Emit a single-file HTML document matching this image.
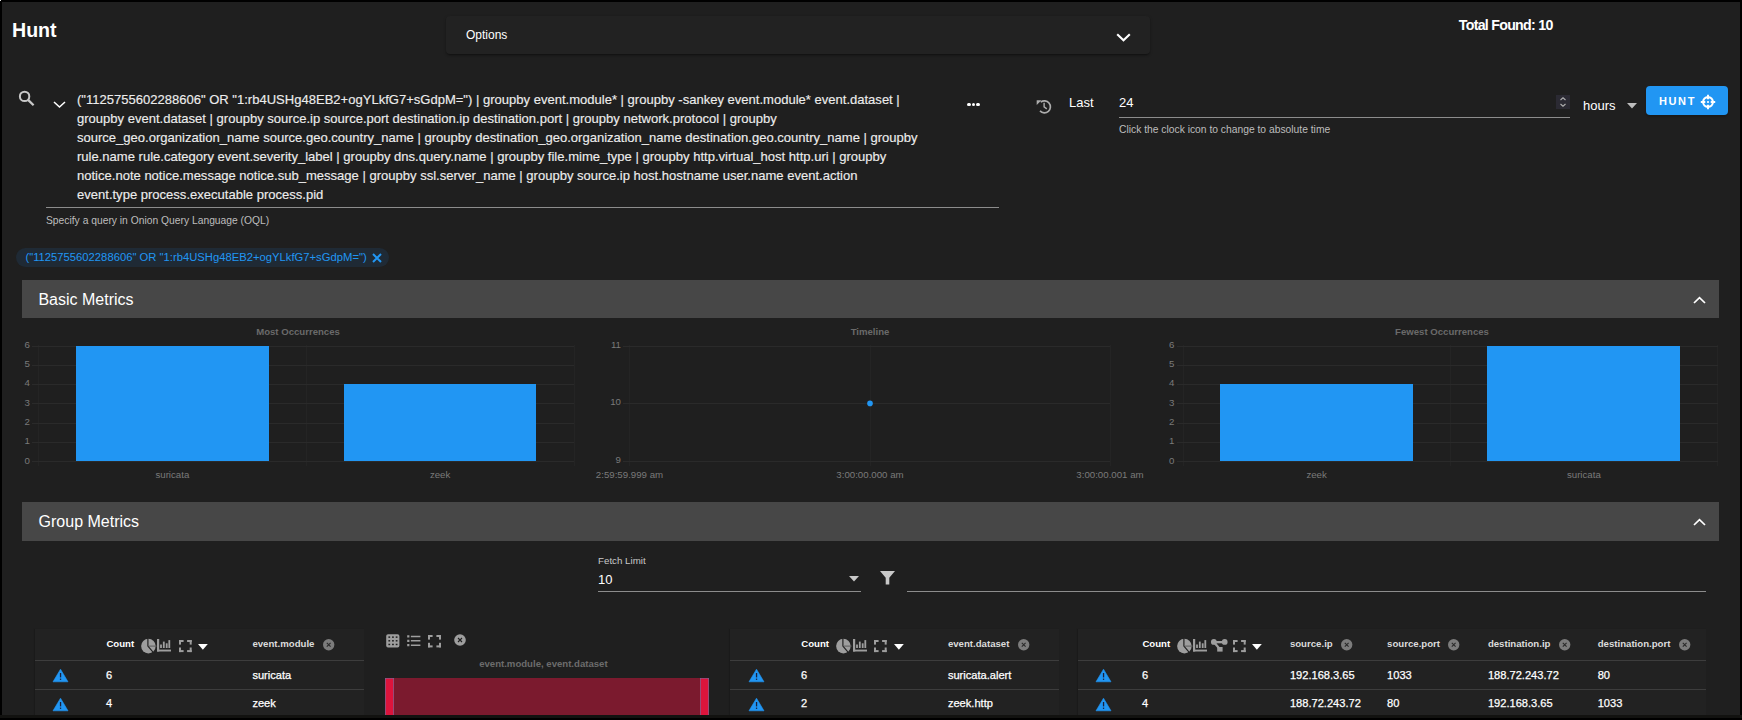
<!DOCTYPE html>
<html><head><meta charset="utf-8">
<style>
html,body{margin:0;padding:0;background:#000;}
body{width:1742px;height:720px;overflow:hidden;position:relative;font-family:"Liberation Sans",sans-serif;}
#pg{position:absolute;left:2px;top:2px;width:1738px;height:713px;background:#1f1f1f;overflow:hidden;}
.a{position:absolute;white-space:pre;line-height:1;}
.w{color:#fff;}
svg{position:absolute;overflow:visible;}
.dt{font-size:11.1px;color:#fff;-webkit-text-stroke:0.25px #fff;}
</style></head><body>
<div id="pg"></div>
<!-- coordinates below are in page (body) pixels -->
<div style="position:absolute;left:0;top:0;width:1px;height:1px;background:#ddd"></div>

<!-- Title -->
<div class="a w" style="left:12px;top:20.6px;font-size:19.6px;font-weight:bold">Hunt</div>

<!-- Options panel -->
<div style="position:absolute;left:446px;top:16px;width:704px;height:38px;background:#222;border-radius:4px;box-shadow:0 2px 2px -1px rgba(0,0,0,.35),0 1px 3px 0 rgba(0,0,0,.25)"></div>
<div class="a w" style="left:466px;top:29px;font-size:12px">Options</div>
<svg style="left:1116px;top:33px" width="15" height="9" viewBox="0 0 15 9"><path d="M1.2 1.2 L7.5 7.2 L13.8 1.2" fill="none" stroke="#fff" stroke-width="2.1"/></svg>

<!-- Total found -->
<div class="a w" style="left:1458.8px;top:18.2px;font-size:14.2px;letter-spacing:-0.72px;font-weight:bold">Total Found: 10</div>


<!-- Search row -->
<svg style="left:15px;top:85px" width="24" height="24" viewBox="0 0 24 24"><circle cx="9.6" cy="11.4" r="4.7" fill="none" stroke="#c8c8c8" stroke-width="2"/><path d="M12.8 14.6 L18.6 20.3" stroke="#c8c8c8" stroke-width="2.3"/></svg>
<svg style="left:53px;top:101px" width="13" height="7" viewBox="0 0 13 7"><path d="M1 1 L6.5 6 L12 1" fill="none" stroke="#fff" stroke-width="1.55"/></svg>
<div class="a" style="left:77px;top:89.7px;font-size:13.04px;line-height:19.1px;color:#ececec;-webkit-text-stroke:0.15px #ececec">("1125755602288606" OR "1:rb4USHg48EB2+ogYLkfG7+sGdpM=") | groupby event.module* | groupby -sankey event.module* event.dataset |
groupby event.dataset | groupby source.ip source.port destination.ip destination.port | groupby network.protocol | groupby
source_geo.organization_name source.geo.country_name | groupby destination_geo.organization_name destination.geo.country_name | groupby
rule.name rule.category event.severity_label | groupby dns.query.name | groupby file.mime_type | groupby http.virtual_host http.uri | groupby
notice.note notice.message notice.sub_message | groupby ssl.server_name | groupby source.ip host.hostname user.name event.action
event.type process.executable process.pid</div>
<div style="position:absolute;left:46px;top:207px;width:953px;height:1px;background:#8c8c8c"></div>
<div class="a" style="left:46px;top:215.5px;font-size:10.3px;color:#bdbdbd">Specify a query in Onion Query Language (OQL)</div>
<!-- dots -->
<div style="position:absolute;left:967.2px;top:102.9px;width:3.6px;height:3.6px;border-radius:50%;background:#fff"></div>
<div style="position:absolute;left:971.7px;top:102.9px;width:3.6px;height:3.6px;border-radius:50%;background:#fff"></div>
<div style="position:absolute;left:976.2px;top:102.9px;width:3.6px;height:3.6px;border-radius:50%;background:#fff"></div>

<!-- Time -->
<svg style="left:1033px;top:96px" width="22" height="21" viewBox="0 0 22 21"><path d="M7.71 6.07 A6.0 6.0 0 1 1 7.01 14.89" fill="none" stroke="#adadad" stroke-width="1.7"/><path d="M3.7 4.2 H8.4 L3.7 8.9Z" fill="#adadad"/><path d="M11.1 6.8 V10.9 L13.8 12.9" fill="none" stroke="#adadad" stroke-width="1.4"/></svg>
<div class="a w" style="left:1069px;top:96px;font-size:13px">Last</div>
<div class="a w" style="left:1119px;top:96px;font-size:13px">24</div>
<div style="position:absolute;left:1556px;top:95px;width:14px;height:14px;background:#2b2a33"></div>
<svg style="left:1558px;top:96px" width="10" height="12" viewBox="0 0 10 12"><path d="M2.5 4 L5 1.8 L7.5 4 M2.5 8 L5 10.2 L7.5 8" fill="none" stroke="#b0b0b0" stroke-width="1.1"/></svg>
<div style="position:absolute;left:1119px;top:117px;width:451px;height:1px;background:#8c8c8c"></div>
<div class="a" style="left:1119px;top:125.2px;font-size:10.3px;color:#bdbdbd">Click the clock icon to change to absolute time</div>
<div class="a w" style="left:1583px;top:98.5px;font-size:13px">hours</div>
<svg style="left:1627px;top:103px" width="10" height="6" viewBox="0 0 10 6"><path d="M0 0 L10 0 L5 5.5Z" fill="#bdbdbd"/></svg>
<div style="position:absolute;left:1646px;top:86px;width:82px;height:29px;background:#2196f3;border-radius:4px;box-shadow:0 2px 2px rgba(0,0,0,.2)"></div>
<div class="a w" style="left:1659px;top:95.5px;font-size:11px;font-weight:bold;letter-spacing:1.6px">HUNT</div>
<svg style="left:1700.2px;top:93.7px" width="16" height="16" viewBox="0 0 16 16"><circle cx="8" cy="8" r="4.9" fill="none" stroke="#fff" stroke-width="2.1"/><path d="M8 0.8 V5.3 M8 10.7 V15.2 M0.8 8 H5.3 M10.7 8 H15.2" stroke="#fff" stroke-width="1.9"/><rect x="7.1" y="7.1" width="1.8" height="1.8" fill="#fff"/></svg>

<!-- chip -->
<div style="position:absolute;left:16px;top:248px;width:373px;height:19px;border-radius:10px;background:#1f2a35"></div>
<div class="a" style="left:25.4px;top:252.4px;font-size:11.25px;color:#2196f3">("1125755602288606" OR "1:rb4USHg48EB2+ogYLkfG7+sGdpM=")</div>
<svg style="left:372px;top:253px" width="10" height="10" viewBox="0 0 10 10"><path d="M1 1 L9 9 M9 1 L1 9" stroke="#2196f3" stroke-width="2"/></svg>

<!-- Basic metrics bar -->
<div style="position:absolute;left:22px;top:280px;width:1697px;height:38px;background:#474747"></div>
<div class="a w" style="left:38.4px;top:292px;font-size:16px">Basic Metrics</div>
<svg style="left:1693px;top:296px" width="13" height="8" viewBox="0 0 13 8"><path d="M1 7 L6.5 1.6 L12 7" fill="none" stroke="#fff" stroke-width="1.7"/></svg>


<!-- charts -->
<svg style="left:0;top:0" width="1742" height="720" viewBox="0 0 1742 720" shape-rendering="crispEdges">
<text x="298" y="335" fill="#6a6a6a" font-size="9.6" font-weight="bold" text-anchor="middle" font-family="Liberation Sans" shape-rendering="auto">Most Occurrences</text>
<rect x="38.0" y="345" width="1" height="121" fill="#242424"/>
<rect x="305.75" y="345" width="1" height="121" fill="#242424"/>
<rect x="573.5" y="345" width="1" height="121" fill="#242424"/>
<rect x="32.0" y="345.5" width="542.0" height="1" fill="#2a2a2a"/>
<text x="30.0" y="347.7" fill="#7a7a7a" font-size="9.7" text-anchor="end" font-family="Liberation Sans" shape-rendering="auto">6</text>
<rect x="32.0" y="364.5" width="542.0" height="1" fill="#2a2a2a"/>
<text x="30.0" y="367.0" fill="#7a7a7a" font-size="9.7" text-anchor="end" font-family="Liberation Sans" shape-rendering="auto">5</text>
<rect x="32.0" y="383.5" width="542.0" height="1" fill="#2a2a2a"/>
<text x="30.0" y="386.3" fill="#7a7a7a" font-size="9.7" text-anchor="end" font-family="Liberation Sans" shape-rendering="auto">4</text>
<rect x="32.0" y="402.5" width="542.0" height="1" fill="#2a2a2a"/>
<text x="30.0" y="405.6" fill="#7a7a7a" font-size="9.7" text-anchor="end" font-family="Liberation Sans" shape-rendering="auto">3</text>
<rect x="32.0" y="422.5" width="542.0" height="1" fill="#2a2a2a"/>
<text x="30.0" y="424.9" fill="#7a7a7a" font-size="9.7" text-anchor="end" font-family="Liberation Sans" shape-rendering="auto">2</text>
<rect x="32.0" y="441.5" width="542.0" height="1" fill="#2a2a2a"/>
<text x="30.0" y="444.2" fill="#7a7a7a" font-size="9.7" text-anchor="end" font-family="Liberation Sans" shape-rendering="auto">1</text>
<rect x="32.0" y="460.5" width="542.0" height="1" fill="#2a2a2a"/>
<text x="30.0" y="463.5" fill="#7a7a7a" font-size="9.7" text-anchor="end" font-family="Liberation Sans" shape-rendering="auto">0</text>
<rect x="76" y="345.8" width="192.7" height="115.0" fill="#2196f3"/>
<rect x="343.8" y="384" width="192.5" height="76.8" fill="#2196f3"/>
<text x="172.375" y="478" fill="#7a7a7a" font-size="9.7" text-anchor="middle" font-family="Liberation Sans" shape-rendering="auto">suricata</text>
<text x="440.125" y="478" fill="#7a7a7a" font-size="9.7" text-anchor="middle" font-family="Liberation Sans" shape-rendering="auto">zeek</text>
<text x="1442" y="335" fill="#6a6a6a" font-size="9.6" font-weight="bold" text-anchor="middle" font-family="Liberation Sans" shape-rendering="auto">Fewest Occurrences</text>
<rect x="1182.5" y="345" width="1" height="121" fill="#242424"/>
<rect x="1449.75" y="345" width="1" height="121" fill="#242424"/>
<rect x="1717.0" y="345" width="1" height="121" fill="#242424"/>
<rect x="1176.5" y="345.5" width="541.0" height="1" fill="#2a2a2a"/>
<text x="1174.5" y="347.7" fill="#7a7a7a" font-size="9.7" text-anchor="end" font-family="Liberation Sans" shape-rendering="auto">6</text>
<rect x="1176.5" y="364.5" width="541.0" height="1" fill="#2a2a2a"/>
<text x="1174.5" y="367.0" fill="#7a7a7a" font-size="9.7" text-anchor="end" font-family="Liberation Sans" shape-rendering="auto">5</text>
<rect x="1176.5" y="383.5" width="541.0" height="1" fill="#2a2a2a"/>
<text x="1174.5" y="386.3" fill="#7a7a7a" font-size="9.7" text-anchor="end" font-family="Liberation Sans" shape-rendering="auto">4</text>
<rect x="1176.5" y="402.5" width="541.0" height="1" fill="#2a2a2a"/>
<text x="1174.5" y="405.6" fill="#7a7a7a" font-size="9.7" text-anchor="end" font-family="Liberation Sans" shape-rendering="auto">3</text>
<rect x="1176.5" y="422.5" width="541.0" height="1" fill="#2a2a2a"/>
<text x="1174.5" y="424.9" fill="#7a7a7a" font-size="9.7" text-anchor="end" font-family="Liberation Sans" shape-rendering="auto">2</text>
<rect x="1176.5" y="441.5" width="541.0" height="1" fill="#2a2a2a"/>
<text x="1174.5" y="444.2" fill="#7a7a7a" font-size="9.7" text-anchor="end" font-family="Liberation Sans" shape-rendering="auto">1</text>
<rect x="1176.5" y="460.5" width="541.0" height="1" fill="#2a2a2a"/>
<text x="1174.5" y="463.5" fill="#7a7a7a" font-size="9.7" text-anchor="end" font-family="Liberation Sans" shape-rendering="auto">0</text>
<rect x="1220" y="383.9" width="192.7" height="76.9" fill="#2196f3"/>
<rect x="1487.4" y="345.5" width="193.0" height="115.3" fill="#2196f3"/>
<text x="1316.625" y="478" fill="#7a7a7a" font-size="9.7" text-anchor="middle" font-family="Liberation Sans" shape-rendering="auto">zeek</text>
<text x="1583.875" y="478" fill="#7a7a7a" font-size="9.7" text-anchor="middle" font-family="Liberation Sans" shape-rendering="auto">suricata</text>
<text x="870" y="335" fill="#6a6a6a" font-size="9.6" font-weight="bold" text-anchor="middle" font-family="Liberation Sans" shape-rendering="auto">Timeline</text>
<rect x="629.0" y="345" width="1" height="121" fill="#242424"/>
<rect x="869.5" y="345" width="1" height="121" fill="#242424"/>
<rect x="1109.5" y="345" width="1" height="121" fill="#242424"/>
<rect x="623.0" y="345.5" width="487.0" height="1" fill="#2a2a2a"/>
<text x="621.0" y="347.8" fill="#7a7a7a" font-size="9.7" text-anchor="end" font-family="Liberation Sans" shape-rendering="auto">11</text>
<rect x="623.0" y="402.5" width="487.0" height="1" fill="#2a2a2a"/>
<text x="621.0" y="405.4" fill="#7a7a7a" font-size="9.7" text-anchor="end" font-family="Liberation Sans" shape-rendering="auto">10</text>
<rect x="623.0" y="460.5" width="487.0" height="1" fill="#2a2a2a"/>
<text x="621.0" y="463.2" fill="#7a7a7a" font-size="9.7" text-anchor="end" font-family="Liberation Sans" shape-rendering="auto">9</text>
<text x="629.5" y="478" fill="#7a7a7a" font-size="9.7" text-anchor="middle" font-family="Liberation Sans" shape-rendering="auto">2:59:59.999 am</text>
<text x="870" y="478" fill="#7a7a7a" font-size="9.7" text-anchor="middle" font-family="Liberation Sans" shape-rendering="auto">3:00:00.000 am</text>
<text x="1110" y="478" fill="#7a7a7a" font-size="9.7" text-anchor="middle" font-family="Liberation Sans" shape-rendering="auto">3:00:00.001 am</text>
<circle cx="870" cy="403.4" r="2.8" fill="#2196f3" shape-rendering="geometricPrecision"/>
</svg>
<!-- /charts -->
<!-- /charts -->
<!-- group -->
<div style="position:absolute;left:22px;top:502px;width:1697px;height:39px;background:#474747"></div>
<div class="a w" style="left:38.6px;top:514px;font-size:16px">Group Metrics</div>
<svg style="left:1693px;top:518px" width="13" height="8" viewBox="0 0 13 8"><path d="M1 7 L6.5 1.6 L12 7" fill="none" stroke="#fff" stroke-width="1.7"/></svg>
<div class="a" style="left:598px;top:555.5px;font-size:9.75px;color:#c8c8c8">Fetch Limit</div>
<div class="a w" style="left:598px;top:573px;font-size:13px">10</div>
<div style="position:absolute;left:598px;top:591px;width:263px;height:1px;background:#8c8c8c"></div>
<svg style="left:849px;top:576px" width="10" height="6" viewBox="0 0 10 6"><path d="M0 0 L10 0 L5 5.6Z" fill="#c8c8c8"/></svg>
<svg style="left:879.5px;top:571px" width="15" height="13.5" viewBox="0 0 15 13.5"><path d="M0 0 H15 L9.3 6.8 V13.5 H5.7 V6.8 Z" fill="#c8c8c8"/></svg>
<div style="position:absolute;left:907px;top:591px;width:799px;height:1px;background:#8c8c8c"></div>
<div style="position:absolute;left:35px;top:629px;width:329px;height:90px;background:#222;box-shadow:-1px 0 1px rgba(0,0,0,.15)"></div>
<div style="position:absolute;left:35px;top:660px;width:329px;height:1px;background:#3d3d3d"></div>
<div style="position:absolute;left:35px;top:689px;width:329px;height:1px;background:#3d3d3d"></div>
<div class="a" style="left:106.4px;top:638.5px;font-size:9.65px;font-weight:bold;color:#fff">Count</div>
<svg style="left:140.6px;top:638.8px" width="15" height="15" viewBox="0 0 15 15"><circle cx="7.4" cy="7.1" r="7.3" fill="#9e9e9e"/><path d="M6.9 -1 V7.1 L12.89 14.05" fill="none" stroke="#222" stroke-width="1.2"/><path d="M7.9 7.1 H15.7" stroke="#5c5c5c" stroke-width="1"/></svg>
<svg style="left:157.2px;top:639.4px" width="14" height="13" viewBox="0 0 14 13"><rect x="0" y="0" width="2.2" height="12.5" fill="#9e9e9e"/><rect x="0" y="10.6" width="14" height="1.9" fill="#9e9e9e"/><rect x="3.1" y="5.5" width="1.8" height="3.5" fill="#9e9e9e"/><rect x="5.9" y="2.6" width="1.8" height="6.4" fill="#9e9e9e"/><rect x="8.8" y="4.3" width="1.8" height="4.7" fill="#9e9e9e"/><rect x="11.4" y="1.1" width="1.8" height="7.9" fill="#9e9e9e"/></svg>
<svg style="left:178.9px;top:639.7px" width="12.7" height="12.1" viewBox="0 0 12.7 12.1"><rect x="0" y="0" width="4.6" height="2" fill="#9e9e9e"/><rect x="0" y="0" width="2" height="4.6" fill="#9e9e9e"/><rect x="8.1" y="0" width="4.6" height="2" fill="#9e9e9e"/><rect x="10.7" y="0" width="2" height="4.6" fill="#9e9e9e"/><rect x="0" y="10.1" width="4.6" height="2" fill="#9e9e9e"/><rect x="0" y="7.5" width="2" height="4.6" fill="#9e9e9e"/><rect x="8.1" y="10.1" width="4.6" height="2" fill="#9e9e9e"/><rect x="10.7" y="7.5" width="2" height="4.6" fill="#9e9e9e"/></svg>
<svg style="left:197.8px;top:643.8px" width="10" height="6" viewBox="0 0 10 6"><path d="M0 0 H9.8 L4.9 5.7Z" fill="#fff"/></svg>
<div class="a" style="left:252.4px;top:638.5px;font-size:9.65px;font-weight:bold;color:#dcdcdc">event.module</div>
<svg style="left:323px;top:639.1px" width="11.4" height="11.4" viewBox="0 0 11.4 11.4"><circle cx="5.7" cy="5.7" r="5.7" fill="#7c7c7c"/><path d="M3.8000000000000003 3.8000000000000003 L7.6 7.6 M7.6 3.8000000000000003 L3.8000000000000003 7.6" stroke="#2a2a2a" stroke-width="1.1"/></svg>
<svg style="left:52.8px;top:669.2px" width="15" height="13" viewBox="0 0 15 13"><path d="M7.5 0.2 L15 12.8 H0 Z" fill="#2196f3" stroke="#2196f3" stroke-width="0.6" stroke-linejoin="round"/><rect x="6.9" y="4" width="1.3" height="4.4" fill="#1a1f3a"/><rect x="6.9" y="9.6" width="1.3" height="1.3" fill="#1a1f3a"/></svg>
<div class="a dt" style="left:106.10000000000001px;top:669.9px">6</div>
<div class="a dt" style="left:252.4px;top:669.9px">suricata</div>
<svg style="left:52.8px;top:697.7px" width="15" height="13" viewBox="0 0 15 13"><path d="M7.5 0.2 L15 12.8 H0 Z" fill="#2196f3" stroke="#2196f3" stroke-width="0.6" stroke-linejoin="round"/><rect x="6.9" y="4" width="1.3" height="4.4" fill="#1a1f3a"/><rect x="6.9" y="9.6" width="1.3" height="1.3" fill="#1a1f3a"/></svg>
<div class="a dt" style="left:106.10000000000001px;top:698.4px">4</div>
<div class="a dt" style="left:252.4px;top:698.4px">zeek</div>
<div style="position:absolute;left:730px;top:629px;width:329px;height:90px;background:#222;box-shadow:-1px 0 1px rgba(0,0,0,.15)"></div>
<div style="position:absolute;left:730px;top:660px;width:329px;height:1px;background:#3d3d3d"></div>
<div style="position:absolute;left:730px;top:689px;width:329px;height:1px;background:#3d3d3d"></div>
<div class="a" style="left:801.2px;top:638.5px;font-size:9.65px;font-weight:bold;color:#fff">Count</div>
<svg style="left:836px;top:638.8px" width="15" height="15" viewBox="0 0 15 15"><circle cx="7.4" cy="7.1" r="7.3" fill="#9e9e9e"/><path d="M6.9 -1 V7.1 L12.89 14.05" fill="none" stroke="#222" stroke-width="1.2"/><path d="M7.9 7.1 H15.7" stroke="#5c5c5c" stroke-width="1"/></svg>
<svg style="left:852.9px;top:639.4px" width="14" height="13" viewBox="0 0 14 13"><rect x="0" y="0" width="2.2" height="12.5" fill="#9e9e9e"/><rect x="0" y="10.6" width="14" height="1.9" fill="#9e9e9e"/><rect x="3.1" y="5.5" width="1.8" height="3.5" fill="#9e9e9e"/><rect x="5.9" y="2.6" width="1.8" height="6.4" fill="#9e9e9e"/><rect x="8.8" y="4.3" width="1.8" height="4.7" fill="#9e9e9e"/><rect x="11.4" y="1.1" width="1.8" height="7.9" fill="#9e9e9e"/></svg>
<svg style="left:874.2px;top:639.7px" width="12.7" height="12.1" viewBox="0 0 12.7 12.1"><rect x="0" y="0" width="4.6" height="2" fill="#9e9e9e"/><rect x="0" y="0" width="2" height="4.6" fill="#9e9e9e"/><rect x="8.1" y="0" width="4.6" height="2" fill="#9e9e9e"/><rect x="10.7" y="0" width="2" height="4.6" fill="#9e9e9e"/><rect x="0" y="10.1" width="4.6" height="2" fill="#9e9e9e"/><rect x="0" y="7.5" width="2" height="4.6" fill="#9e9e9e"/><rect x="8.1" y="10.1" width="4.6" height="2" fill="#9e9e9e"/><rect x="10.7" y="7.5" width="2" height="4.6" fill="#9e9e9e"/></svg>
<svg style="left:893.6px;top:643.8px" width="10" height="6" viewBox="0 0 10 6"><path d="M0 0 H9.8 L4.9 5.7Z" fill="#fff"/></svg>
<div class="a" style="left:947.9px;top:638.5px;font-size:9.65px;font-weight:bold;color:#dcdcdc">event.dataset</div>
<svg style="left:1018px;top:639.1px" width="11.4" height="11.4" viewBox="0 0 11.4 11.4"><circle cx="5.7" cy="5.7" r="5.7" fill="#7c7c7c"/><path d="M3.8000000000000003 3.8000000000000003 L7.6 7.6 M7.6 3.8000000000000003 L3.8000000000000003 7.6" stroke="#2a2a2a" stroke-width="1.1"/></svg>
<svg style="left:748.5px;top:669.2px" width="15" height="13" viewBox="0 0 15 13"><path d="M7.5 0.2 L15 12.8 H0 Z" fill="#2196f3" stroke="#2196f3" stroke-width="0.6" stroke-linejoin="round"/><rect x="6.9" y="4" width="1.3" height="4.4" fill="#1a1f3a"/><rect x="6.9" y="9.6" width="1.3" height="1.3" fill="#1a1f3a"/></svg>
<div class="a dt" style="left:800.9px;top:669.9px">6</div>
<div class="a dt" style="left:947.9px;top:669.9px">suricata.alert</div>
<svg style="left:748.5px;top:697.7px" width="15" height="13" viewBox="0 0 15 13"><path d="M7.5 0.2 L15 12.8 H0 Z" fill="#2196f3" stroke="#2196f3" stroke-width="0.6" stroke-linejoin="round"/><rect x="6.9" y="4" width="1.3" height="4.4" fill="#1a1f3a"/><rect x="6.9" y="9.6" width="1.3" height="1.3" fill="#1a1f3a"/></svg>
<div class="a dt" style="left:800.9px;top:698.4px">2</div>
<div class="a dt" style="left:947.9px;top:698.4px">zeek.http</div>
<div style="position:absolute;left:1078px;top:629px;width:628px;height:90px;background:#222;box-shadow:-1px 0 1px rgba(0,0,0,.15)"></div>
<div style="position:absolute;left:1078px;top:660px;width:628px;height:1px;background:#3d3d3d"></div>
<div style="position:absolute;left:1078px;top:689px;width:628px;height:1px;background:#3d3d3d"></div>
<div class="a" style="left:1142.4px;top:638.5px;font-size:9.65px;font-weight:bold;color:#fff">Count</div>
<svg style="left:1176.6px;top:638.8px" width="15" height="15" viewBox="0 0 15 15"><circle cx="7.4" cy="7.1" r="7.3" fill="#9e9e9e"/><path d="M6.9 -1 V7.1 L12.89 14.05" fill="none" stroke="#222" stroke-width="1.2"/><path d="M7.9 7.1 H15.7" stroke="#5c5c5c" stroke-width="1"/></svg>
<svg style="left:1193.1px;top:639.4px" width="14" height="13" viewBox="0 0 14 13"><rect x="0" y="0" width="2.2" height="12.5" fill="#9e9e9e"/><rect x="0" y="10.6" width="14" height="1.9" fill="#9e9e9e"/><rect x="3.1" y="5.5" width="1.8" height="3.5" fill="#9e9e9e"/><rect x="5.9" y="2.6" width="1.8" height="6.4" fill="#9e9e9e"/><rect x="8.8" y="4.3" width="1.8" height="4.7" fill="#9e9e9e"/><rect x="11.4" y="1.1" width="1.8" height="7.9" fill="#9e9e9e"/></svg>
<svg style="left:1211px;top:639.2px" width="17" height="13" viewBox="0 0 17 13"><circle cx="2.85" cy="2.95" r="2.9" fill="#9e9e9e"/><circle cx="13.7" cy="2.95" r="2.9" fill="#9e9e9e"/><rect x="2.85" y="2" width="10.85" height="2.3" fill="#9e9e9e"/><rect x="6.2" y="8" width="5.4" height="4.6" fill="#9e9e9e"/><path d="M2.85 2.95 L8.9 10.3" stroke="#9e9e9e" stroke-width="2.2"/></svg>
<svg style="left:1232.6px;top:639.7px" width="12.7" height="12.1" viewBox="0 0 12.7 12.1"><rect x="0" y="0" width="4.6" height="2" fill="#9e9e9e"/><rect x="0" y="0" width="2" height="4.6" fill="#9e9e9e"/><rect x="8.1" y="0" width="4.6" height="2" fill="#9e9e9e"/><rect x="10.7" y="0" width="2" height="4.6" fill="#9e9e9e"/><rect x="0" y="10.1" width="4.6" height="2" fill="#9e9e9e"/><rect x="0" y="7.5" width="2" height="4.6" fill="#9e9e9e"/><rect x="8.1" y="10.1" width="4.6" height="2" fill="#9e9e9e"/><rect x="10.7" y="7.5" width="2" height="4.6" fill="#9e9e9e"/></svg>
<svg style="left:1252px;top:643.8px" width="10" height="6" viewBox="0 0 10 6"><path d="M0 0 H9.8 L4.9 5.7Z" fill="#fff"/></svg>
<div class="a" style="left:1289.9px;top:638.5px;font-size:9.65px;font-weight:bold;color:#dcdcdc">source.ip</div>
<svg style="left:1341px;top:639.1px" width="11.4" height="11.4" viewBox="0 0 11.4 11.4"><circle cx="5.7" cy="5.7" r="5.7" fill="#7c7c7c"/><path d="M3.8000000000000003 3.8000000000000003 L7.6 7.6 M7.6 3.8000000000000003 L3.8000000000000003 7.6" stroke="#2a2a2a" stroke-width="1.1"/></svg>
<div class="a" style="left:1387.1000000000001px;top:638.5px;font-size:9.65px;font-weight:bold;color:#dcdcdc">source.port</div>
<svg style="left:1448.2px;top:639.1px" width="11.4" height="11.4" viewBox="0 0 11.4 11.4"><circle cx="5.7" cy="5.7" r="5.7" fill="#7c7c7c"/><path d="M3.8000000000000003 3.8000000000000003 L7.6 7.6 M7.6 3.8000000000000003 L3.8000000000000003 7.6" stroke="#2a2a2a" stroke-width="1.1"/></svg>
<div class="a" style="left:1487.9px;top:638.5px;font-size:9.65px;font-weight:bold;color:#dcdcdc">destination.ip</div>
<svg style="left:1558.6px;top:639.1px" width="11.4" height="11.4" viewBox="0 0 11.4 11.4"><circle cx="5.7" cy="5.7" r="5.7" fill="#7c7c7c"/><path d="M3.8000000000000003 3.8000000000000003 L7.6 7.6 M7.6 3.8000000000000003 L3.8000000000000003 7.6" stroke="#2a2a2a" stroke-width="1.1"/></svg>
<div class="a" style="left:1597.7px;top:638.5px;font-size:9.65px;font-weight:bold;color:#dcdcdc">destination.port</div>
<svg style="left:1679.3px;top:639.1px" width="11.4" height="11.4" viewBox="0 0 11.4 11.4"><circle cx="5.7" cy="5.7" r="5.7" fill="#7c7c7c"/><path d="M3.8000000000000003 3.8000000000000003 L7.6 7.6 M7.6 3.8000000000000003 L3.8000000000000003 7.6" stroke="#2a2a2a" stroke-width="1.1"/></svg>
<svg style="left:1096px;top:669.2px" width="15" height="13" viewBox="0 0 15 13"><path d="M7.5 0.2 L15 12.8 H0 Z" fill="#2196f3" stroke="#2196f3" stroke-width="0.6" stroke-linejoin="round"/><rect x="6.9" y="4" width="1.3" height="4.4" fill="#1a1f3a"/><rect x="6.9" y="9.6" width="1.3" height="1.3" fill="#1a1f3a"/></svg>
<div class="a dt" style="left:1142.1000000000001px;top:669.9px">6</div>
<div class="a dt" style="left:1289.9px;top:669.9px">192.168.3.65</div>
<div class="a dt" style="left:1387.1000000000001px;top:669.9px">1033</div>
<div class="a dt" style="left:1487.9px;top:669.9px">188.72.243.72</div>
<div class="a dt" style="left:1597.7px;top:669.9px">80</div>
<svg style="left:1096px;top:697.7px" width="15" height="13" viewBox="0 0 15 13"><path d="M7.5 0.2 L15 12.8 H0 Z" fill="#2196f3" stroke="#2196f3" stroke-width="0.6" stroke-linejoin="round"/><rect x="6.9" y="4" width="1.3" height="4.4" fill="#1a1f3a"/><rect x="6.9" y="9.6" width="1.3" height="1.3" fill="#1a1f3a"/></svg>
<div class="a dt" style="left:1142.1000000000001px;top:698.4px">4</div>
<div class="a dt" style="left:1289.9px;top:698.4px">188.72.243.72</div>
<div class="a dt" style="left:1387.1000000000001px;top:698.4px">80</div>
<div class="a dt" style="left:1487.9px;top:698.4px">192.168.3.65</div>
<div class="a dt" style="left:1597.7px;top:698.4px">1033</div>
<svg style="left:383.6px;top:631.7px" width="17.6" height="17.6" viewBox="0 0 24 24"><rect x="3" y="3" width="18" height="18" rx="2.5" fill="#9e9e9e"/><rect x="6" y="6" width="2.4" height="2" fill="#1f1f1f"/><rect x="6" y="11" width="2.4" height="2" fill="#1f1f1f"/><rect x="6" y="16" width="2.4" height="2" fill="#1f1f1f"/><rect x="11" y="6" width="2.4" height="2" fill="#1f1f1f"/><rect x="11" y="11" width="2.4" height="2" fill="#1f1f1f"/><rect x="11" y="16" width="2.4" height="2" fill="#1f1f1f"/><rect x="16" y="6" width="2.4" height="2" fill="#1f1f1f"/><rect x="16" y="11" width="2.4" height="2" fill="#1f1f1f"/><rect x="16" y="16" width="2.4" height="2" fill="#1f1f1f"/></svg>
<svg style="left:404.6px;top:631.6px" width="17.6" height="17.6" viewBox="0 0 24 24"><path fill="#9e9e9e" d="M3,4.5H6V7.5H3Z M3,10.5H6V13.5H3Z M3,16.5H6V19.5H3Z M8,5H21V7H8Z M8,11H21V13H8Z M8,17H21V19H8Z"/></svg>
<svg style="left:428px;top:634.6px" width="13" height="12.4" viewBox="0 0 13 12.4"><rect x="0" y="0" width="4.6" height="2" fill="#9e9e9e"/><rect x="0" y="0" width="2" height="4.6" fill="#9e9e9e"/><rect x="8.4" y="0" width="4.6" height="2" fill="#9e9e9e"/><rect x="11" y="0" width="2" height="4.6" fill="#9e9e9e"/><rect x="0" y="10.4" width="4.6" height="2" fill="#9e9e9e"/><rect x="0" y="7.800000000000001" width="2" height="4.6" fill="#9e9e9e"/><rect x="8.4" y="10.4" width="4.6" height="2" fill="#9e9e9e"/><rect x="11" y="7.800000000000001" width="2" height="4.6" fill="#9e9e9e"/></svg>
<svg style="left:452.6px;top:632.5px" width="14" height="14" viewBox="0 0 24 24"><circle cx="12" cy="12" r="10" fill="#9e9e9e"/><path d="M8.6 8.6 L15.4 15.4 M15.4 8.6 L8.6 15.4" stroke="#1f1f1f" stroke-width="1.9"/></svg>
<div class="a" style="left:543.4px;top:658.5px;font-size:9.6px;font-weight:bold;color:#6c6c6c;transform:translateX(-50%)">event.module, event.dataset</div>
<div style="position:absolute;left:385px;top:677.5px;width:324px;height:40px;background:#7b1a2e"></div>
<div style="position:absolute;left:385px;top:677.5px;width:8.7px;height:40px;background:#dc143c;box-shadow:inset 0 0 0 0.6px #6b6fa0"></div>
<div style="position:absolute;left:700px;top:677.5px;width:8.9px;height:40px;background:#dc143c;box-shadow:inset 0 0 0 0.6px #6b6fa0"></div>
<div style="position:absolute;left:0;top:715px;width:1742px;height:2.5px;background:#121210"></div>
<div style="position:absolute;left:0;top:717.5px;width:1742px;height:3px;background:#000"></div>
<!-- /group -->
</body></html>
